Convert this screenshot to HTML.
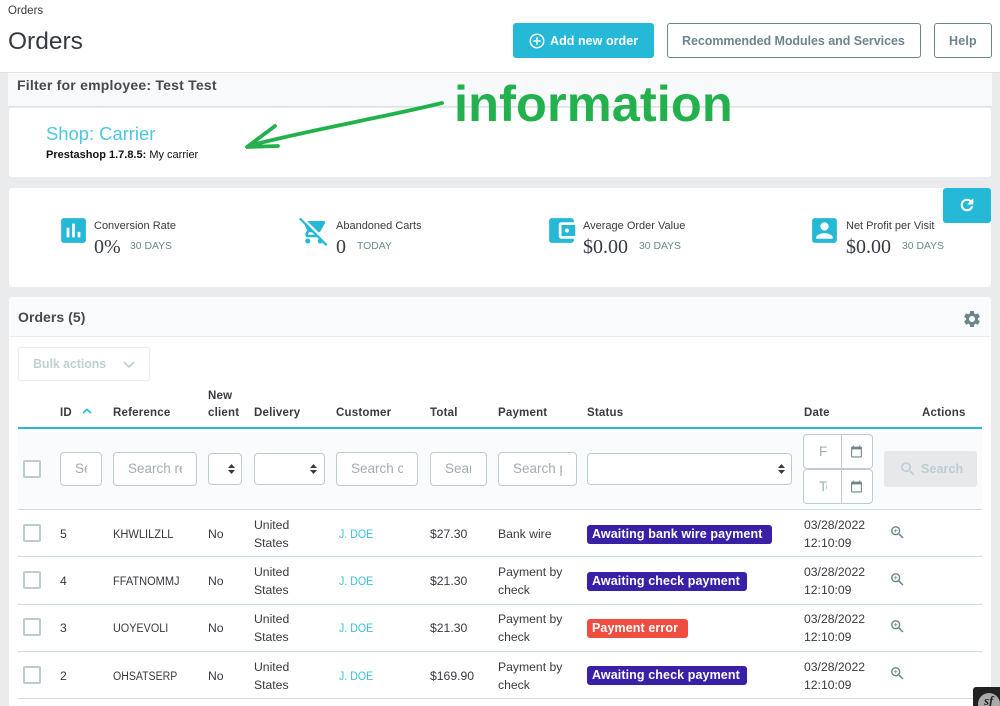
<!DOCTYPE html>
<html><head><meta charset="utf-8"><title>Orders</title>
<style>
html,body{margin:0;padding:0;width:1000px;height:706px;overflow:hidden}
body{position:relative;background:#e9ebec;font-family:"Liberation Sans",sans-serif;font-size:12.2px;color:#363a41}
.b{position:absolute;box-sizing:border-box}
.t{position:absolute;white-space:nowrap;line-height:18px}
.c{margin-top:1px}
.r{font-size:12.2px;margin-top:1px;transform-origin:0 50%}
.j{font-size:12.2px;margin-top:1px;color:#3fc0dc;transform:scaleX(.87);transform-origin:0 50%}
.h{font-weight:700;font-size:11.5px;letter-spacing:.2px;color:#363a41;margin-top:1px}
.g{color:#6c868e}
.in{position:absolute;box-sizing:border-box;background:#fff;border:1px solid #bbcdd2;border-radius:4px;color:#a0aeb3;font-size:13.5px;line-height:32px;white-space:nowrap}
.in div{overflow:hidden}
.cb{position:absolute;box-sizing:border-box;width:18px;height:18px;left:23px;background:#fff;border:2px solid #bbcdd2;border-radius:2px}
.line{position:absolute;left:18px;width:964px;height:1px;background:#cfdde1}
.bd{position:absolute;height:19px;line-height:19px;left:587px;border-radius:3px;color:#fff;font-weight:700;font-size:12.5px;padding:0 5px;box-sizing:border-box;white-space:nowrap;letter-spacing:.1px}
svg{position:absolute}
</style></head><body>
<!-- header -->
<div class="b" style="left:0;top:0;width:1000px;height:73px;background:#fff;border-bottom:1px solid #dfe3e5"></div>
<div class="t" style="left:8px;top:2px;font-size:11.5px;color:#363a41">Orders</div>
<div class="t" style="left:8px;top:28px;font-size:24.5px;line-height:28px;color:#363a41">Orders</div>
<div class="b" style="left:513px;top:23px;width:141px;height:35px;background:#25b9d7;border-radius:3px"></div>
<svg style="left:528px;top:32px" width="18" height="18" viewBox="0 0 24 24" fill="#fff"><path d="M13 7h-2v4H7v2h4v4h2v-4h4v-2h-4V7zm-1-5C6.48 2 2 6.48 2 12s4.48 10 10 10 10-4.48 10-10S17.52 2 12 2zm0 18c-4.41 0-8-3.59-8-8s3.59-8 8-8 8 3.59 8 8-3.59 8-8 8z"/></svg>
<div class="t" style="left:550px;top:32px;color:#fff;font-weight:700;font-size:12.5px;letter-spacing:.05px">Add new order</div>
<div class="b" style="left:667px;top:23px;width:254px;height:35px;background:#fff;border:1px solid #6c868e;border-radius:3px"></div>
<div class="t g" style="left:682px;top:32px;font-weight:700;font-size:12.5px;letter-spacing:-.05px">Recommended Modules and Services</div>
<div class="b" style="left:934px;top:23px;width:58px;height:35px;background:#fff;border:1px solid #6c868e;border-radius:3px"></div>
<div class="t g" style="left:949px;top:32px;font-weight:700;font-size:12.5px;letter-spacing:.2px">Help</div>
<!-- filter -->
<div class="b" style="left:8px;top:73px;width:984px;height:34px;background:#f8f9fb;border-bottom:1px solid #d9e2e6"></div>
<div class="t" style="left:17px;top:76px;font-size:14px;font-weight:700;color:#464a50;letter-spacing:.22px">Filter for employee: Test Test</div>
<div class="b" style="left:9px;top:108px;width:982px;height:69px;background:#fff;border-radius:3px"></div>
<div class="t" style="left:46px;top:123px;font-size:18.4px;line-height:22px;color:#4fc6df">Shop: Carrier</div>
<div class="t" style="left:46px;top:146px;font-size:11px;color:#111"><b>Prestashop 1.7.8.5:</b> My carrier</div>
<div class="t" style="left:454px;top:74px;font-size:50.5px;line-height:60px;font-weight:700;color:#22b14c;letter-spacing:.1px">information</div>
<svg style="left:0;top:0" width="1000" height="200" fill="none" stroke="#22b14c" stroke-width="3.8" stroke-linecap="round" stroke-linejoin="round"><path d="M442 103C380 118 310 130 252 145M275 126L247 147L278 146"/></svg>
<!-- KPI -->
<div class="b" style="left:9px;top:188px;width:982px;height:99px;background:#fff;border-radius:3px"></div>
<div class="b" style="left:943px;top:188px;width:48px;height:34.5px;background:#25b9d7;border-radius:3px"></div>
<svg style="left:958px;top:196px" width="18" height="18" viewBox="0 0 24 24" fill="#fff" stroke="#fff" stroke-width=".8"><path d="M17.65 6.35C16.2 4.9 14.21 4 12 4c-4.42 0-7.99 3.58-7.99 8s3.57 8 7.99 8c3.73 0 6.84-2.55 7.73-6h-2.08c-.82 2.33-3.04 4-5.65 4-3.31 0-6-2.69-6-6s2.69-6 6-6c1.66 0 3.14.69 4.22 1.78L13 11h7V4l-2.35 2.35z"/></svg>
<svg style="left:57px;top:214px" width="33" height="33" viewBox="0 0 24 24" fill="#25b9d7"><path d="M19 3H5c-1.1 0-2 .9-2 2v14c0 1.1.9 2 2 2h14c1.1 0 2-.9 2-2V5c0-1.1-.9-2-2-2zM9 17H7v-7h2v7zm4 0h-2V7h2v10zm4 0h-2v-4h2v4z"/></svg>
<svg style="left:299px;top:216px" width="30" height="30" viewBox="0 0 24 24" fill="#25b9d7"><path d="M22.73 22.73L2.77 2.77 2 2l-.73-.73L0 2.54l4.39 4.39 2.21 4.66-1.35 2.45c-.16.28-.25.61-.25.96 0 1.1.9 2 2 2h7.46l1.38 1.38c-.5.36-.83.95-.83 1.62 0 1.1.89 2 1.99 2 .67 0 1.26-.33 1.62-.84L21.46 24l1.27-1.27zM7.42 15c-.14 0-.25-.11-.25-.25l.03-.12.9-1.63h2.36l2 2H7.42zm8.13-2c.75 0 1.41-.41 1.75-1.03l3.58-6.49c.08-.14.12-.31.12-.48 0-.55-.45-1-1-1H6.54l9.01 9zM7 18c-1.1 0-1.99.9-1.99 2S5.9 22 7 22s2-.9 2-2-.9-2-2-2z"/></svg>
<svg style="left:545px;top:214px" width="33" height="33" viewBox="0 0 24 24" fill="#25b9d7"><path d="M21 18v1c0 1.1-.9 2-2 2H5c-1.11 0-2-.9-2-2V5c0-1.1.89-2 2-2h14c1.1 0 2 .9 2 2v1h-9c-1.11 0-2 .9-2 2v8c0 1.1.89 2 2 2h9zm-9-2h10V8H12v8zm4-2.5c-.83 0-1.5-.67-1.5-1.5s.67-1.5 1.5-1.5 1.5.67 1.5 1.5-.67 1.5-1.5 1.5z"/></svg>
<svg style="left:808px;top:214px" width="33" height="33" viewBox="0 0 24 24" fill="#25b9d7"><path d="M3 5v14c0 1.1.89 2 2 2h14c1.1 0 2-.9 2-2V5c0-1.1-.9-2-2-2H5c-1.11 0-2 .9-2 2zm12 4c0 1.66-1.34 3-3 3s-3-1.34-3-3 1.34-3 3-3 3 1.34 3 3zm-9 8c0-2 4-3.1 6-3.1s6 1.1 6 3.1v1H6v-1z"/></svg>
<div class="t" style="left:94px;top:217px;font-size:11px">Conversion Rate</div>
<div class="t" style="left:94px;top:238px;font-family:'Liberation Serif',serif;font-size:20px">0%</div>
<div class="t g" style="left:130px;top:238px;font-size:10.4px">30 DAYS</div>
<div class="t" style="left:336px;top:217px;font-size:11px">Abandoned Carts</div>
<div class="t" style="left:336px;top:238px;font-family:'Liberation Serif',serif;font-size:20px">0</div>
<div class="t g" style="left:357px;top:238px;font-size:10.4px">TODAY</div>
<div class="t" style="left:583px;top:217px;font-size:11px">Average Order Value</div>
<div class="t" style="left:583px;top:238px;font-family:'Liberation Serif',serif;font-size:20px">$0.00</div>
<div class="t g" style="left:639px;top:238px;font-size:10.4px">30 DAYS</div>
<div class="t" style="left:846px;top:217px;font-size:11px">Net Profit per Visit</div>
<div class="t" style="left:846px;top:238px;font-family:'Liberation Serif',serif;font-size:20px">$0.00</div>
<div class="t g" style="left:902px;top:238px;font-size:10.4px">30 DAYS</div>
<!-- panel -->
<div class="b" style="left:9px;top:297px;width:982px;height:409px;background:#fff;border-radius:3px 3px 0 0"></div>
<div class="b" style="left:9px;top:297px;width:982px;height:40px;background:#fafbfc;border-bottom:1px solid #e6ecee;border-radius:3px 3px 0 0"></div>
<div class="t" style="left:18px;top:308px;font-size:14px;font-weight:700;color:#464a50;letter-spacing:.05px">Orders (5)</div>
<svg style="left:962px;top:309px" width="20" height="20" viewBox="0 0 24 24" fill="#6c868e"><path d="M19.14 12.94c.04-.3.06-.61.06-.94 0-.32-.02-.64-.07-.94l2.03-1.58c.18-.14.23-.41.12-.61l-1.92-3.32c-.12-.22-.37-.29-.59-.22l-2.39.96c-.5-.38-1.03-.7-1.62-.94l-.36-2.54c-.04-.24-.24-.41-.48-.41h-3.84c-.24 0-.43.17-.47.41l-.36 2.54c-.59.24-1.13.57-1.62.94l-2.39-.96c-.22-.08-.47 0-.59.22L2.74 8.87c-.12.21-.08.47.12.61l2.03 1.58c-.05.3-.09.63-.09.94s.02.64.07.94l-2.03 1.58c-.18.14-.23.41-.12.61l1.92 3.32c.12.22.37.29.59.22l2.39-.96c.5.38 1.03.7 1.62.94l.36 2.54c.05.24.24.41.48.41h3.84c.24 0 .44-.17.47-.41l.36-2.54c.59-.24 1.13-.56 1.62-.94l2.39.96c.22.08.47 0 .59-.22l1.92-3.32c.12-.22.07-.47-.12-.61l-2.01-1.58zM12 15.6c-1.98 0-3.6-1.62-3.6-3.6s1.62-3.6 3.6-3.6 3.6 1.62 3.6 3.6-1.62 3.6-3.6 3.6z"/></svg>
<div class="b" style="left:18px;top:347px;width:132px;height:34px;background:#fff;border:1px solid #e8edef;border-radius:3px"></div>
<div class="t" style="left:33px;top:355px;font-size:12.5px;font-weight:700;color:#bfd0d5;letter-spacing:-.1px">Bulk actions</div>
<svg style="left:122px;top:360px" width="14" height="10" fill="none" stroke="#bfd0d5" stroke-width="1.8"><path d="M2 2L7 7L12 2"/></svg>
<!-- table head -->
<div class="t h" style="left:60px;top:403px">ID</div>
<svg style="left:82px;top:408px" width="10" height="7" fill="none" stroke="#25b9d7" stroke-width="1.7"><path d="M1 5L5 1.5L9 5"/></svg>
<div class="t h" style="left:113px;top:403px">Reference</div>
<div class="t h" style="left:208px;top:386px">New</div>
<div class="t h" style="left:208px;top:403px">client</div>
<div class="t h" style="left:254px;top:403px">Delivery</div>
<div class="t h" style="left:336px;top:403px">Customer</div>
<div class="t h" style="left:430px;top:403px">Total</div>
<div class="t h" style="left:498px;top:403px">Payment</div>
<div class="t h" style="left:587px;top:403px">Status</div>
<div class="t h" style="left:804px;top:403px">Date</div>
<div class="t h" style="left:922px;top:403px">Actions</div>
<div class="b" style="left:18px;top:427px;width:964px;height:2px;background:#25b9d7"></div>
<!-- filter row -->
<div class="b" style="left:18px;top:429px;width:964px;height:80px;background:#fafbfc"></div>
<div class="cb" style="top:460px"></div>
<div class="in" style="left:60px;top:452px;width:42px;height:34px;padding-left:14px"><div style="width:12px">Search</div></div>
<div class="in" style="left:113px;top:452px;width:84px;height:34px;padding-left:14px"><div style="width:54px">Search reference</div></div>
<div class="in" style="left:208px;top:453px;width:34px;height:32px"></div>
<div class="in" style="left:254px;top:453px;width:71px;height:32px"></div>
<div class="in" style="left:336px;top:452px;width:82px;height:34px;padding-left:14px"><div style="width:52px">Search customer</div></div>
<div class="in" style="left:430px;top:452px;width:57px;height:34px;padding-left:14px"><div style="width:26px">Search total</div></div>
<div class="in" style="left:498px;top:452px;width:79px;height:34px;padding-left:14px"><div style="width:49px">Search payment</div></div>
<div class="in" style="left:587px;top:453px;width:205px;height:32px"></div>
<svg style="left:228px;top:464px" width="7" height="10" fill="#363a41"><path d="M3.5 0L7 4H0zM3.5 10L0 6H7z"/></svg>
<svg style="left:310px;top:464px" width="7" height="10" fill="#363a41"><path d="M3.5 0L7 4H0zM3.5 10L0 6H7z"/></svg>
<svg style="left:778px;top:464px" width="7" height="10" fill="#363a41"><path d="M3.5 0L7 4H0zM3.5 10L0 6H7z"/></svg>
<div class="in" style="left:803px;top:434px;width:70px;height:35px;padding-left:15px;line-height:34px"><div style="width:8px">From</div></div>
<div class="in" style="left:803px;top:469px;width:70px;height:35px;padding-left:15px;line-height:34px"><div style="width:8px">To</div></div>
<div class="b" style="left:841px;top:434px;width:1px;height:70px;background:#bbcdd2"></div>
<svg style="left:850px;top:445px" width="13" height="13" viewBox="0 0 24 24" fill="#6c868e"><path d="M20 3h-1V1h-2v2H7V1H5v2H4c-1.1 0-2 .9-2 2v16c0 1.1.9 2 2 2h16c1.1 0 2-.9 2-2V5c0-1.1-.9-2-2-2zm0 18H4V8h16v13z"/></svg>
<svg style="left:850px;top:480px" width="13" height="13" viewBox="0 0 24 24" fill="#6c868e"><path d="M20 3h-1V1h-2v2H7V1H5v2H4c-1.1 0-2 .9-2 2v16c0 1.1.9 2 2 2h16c1.1 0 2-.9 2-2V5c0-1.1-.9-2-2-2zm0 18H4V8h16v13z"/></svg>
<div class="b" style="left:884px;top:451px;width:93px;height:36px;background:#e6e8ea;border-radius:3px"></div>
<svg style="left:899px;top:460px" width="18" height="18" viewBox="0 0 24 24" fill="#bccdd2"><path d="M15.5 14h-.79l-.28-.27C15.41 12.59 16 11.11 16 9.5 16 5.91 13.09 3 9.5 3S3 5.91 3 9.5 5.91 16 9.5 16c1.61 0 3.09-.59 4.23-1.57l.27.28v.79l5 4.99L20.49 19l-4.99-5zm-6 0C7.01 14 5 11.99 5 9.5S7.01 5 9.5 5 14 7.01 14 9.5 11.99 14 9.5 14z"/></svg>
<div class="t" style="left:921px;top:460px;font-size:12.5px;font-weight:700;color:#bccdd2;letter-spacing:.1px">Search</div>
<div class="line" style="top:509px"></div>
<!-- row 5 -->
<div class="cb" style="top:524px"></div>
<div class="t c" style="left:60px;top:524px">5</div>
<div class="t r" style="left:113px;top:524px;transform:scaleX(.91)">KHWLILZLL</div>
<div class="t c" style="left:208px;top:524px">No</div>
<div class="t c" style="left:254px;top:515px">United</div><div class="t c" style="left:254px;top:533px">States</div>
<div class="t j" style="left:339px;top:524px">J. DOE</div>
<div class="t c" style="left:430px;top:524px">$27.30</div>
<div class="t c" style="left:498px;top:524px">Bank wire</div>
<div class="bd" style="top:524.5px;width:185px;background:#3a20a6">Awaiting bank wire payment</div>
<div class="t c" style="left:804px;top:515px">03/28/2022</div><div class="t c" style="left:804px;top:533px">12:10:09</div>
<svg style="left:889px;top:524px" width="17" height="17" viewBox="0 0 24 24" fill="#6c868e"><path d="M15.5 14h-.79l-.28-.27C15.41 12.59 16 11.11 16 9.5 16 5.91 13.09 3 9.5 3S3 5.91 3 9.5 5.91 16 9.5 16c1.61 0 3.09-.59 4.23-1.57l.27.28v.79l5 4.99L20.49 19l-4.99-5zm-6 0C7.01 14 5 11.99 5 9.5S7.01 5 9.5 5 14 7.01 14 9.5 11.99 14 9.5 14zM12 10h-2v2H9v-2H7V9h2V7h1v2h2v1z"/></svg>
<div class="line" style="top:556px"></div>
<!-- row 4 -->
<div class="cb" style="top:571px"></div>
<div class="t c" style="left:60px;top:571px">4</div>
<div class="t r" style="left:113px;top:571px;transform:scaleX(.905)">FFATNOMMJ</div>
<div class="t c" style="left:208px;top:571px">No</div>
<div class="t c" style="left:254px;top:562px">United</div><div class="t c" style="left:254px;top:580px">States</div>
<div class="t j" style="left:339px;top:571px">J. DOE</div>
<div class="t c" style="left:430px;top:571px">$21.30</div>
<div class="t c" style="left:498px;top:562px">Payment by</div><div class="t c" style="left:498px;top:580px">check</div>
<div class="bd" style="top:572px;width:160px;background:#3a20a6">Awaiting check payment</div>
<div class="t c" style="left:804px;top:562px">03/28/2022</div><div class="t c" style="left:804px;top:580px">12:10:09</div>
<svg style="left:889px;top:571px" width="17" height="17" viewBox="0 0 24 24" fill="#6c868e"><path d="M15.5 14h-.79l-.28-.27C15.41 12.59 16 11.11 16 9.5 16 5.91 13.09 3 9.5 3S3 5.91 3 9.5 5.91 16 9.5 16c1.61 0 3.09-.59 4.23-1.57l.27.28v.79l5 4.99L20.49 19l-4.99-5zm-6 0C7.01 14 5 11.99 5 9.5S7.01 5 9.5 5 14 7.01 14 9.5 11.99 14 9.5 14zM12 10h-2v2H9v-2H7V9h2V7h1v2h2v1z"/></svg>
<div class="line" style="top:603.5px"></div>
<!-- row 3 -->
<div class="cb" style="top:618px"></div>
<div class="t c" style="left:60px;top:618px">3</div>
<div class="t r" style="left:113px;top:618px;transform:scaleX(.887)">UOYEVOLI</div>
<div class="t c" style="left:208px;top:618px">No</div>
<div class="t c" style="left:254px;top:609px">United</div><div class="t c" style="left:254px;top:627px">States</div>
<div class="t j" style="left:339px;top:618px">J. DOE</div>
<div class="t c" style="left:430px;top:618px">$21.30</div>
<div class="t c" style="left:498px;top:609px">Payment by</div><div class="t c" style="left:498px;top:627px">check</div>
<div class="bd" style="top:619px;width:101px;background:#ef4d40">Payment error</div>
<div class="t c" style="left:804px;top:609px">03/28/2022</div><div class="t c" style="left:804px;top:627px">12:10:09</div>
<svg style="left:889px;top:618px" width="17" height="17" viewBox="0 0 24 24" fill="#6c868e"><path d="M15.5 14h-.79l-.28-.27C15.41 12.59 16 11.11 16 9.5 16 5.91 13.09 3 9.5 3S3 5.91 3 9.5 5.91 16 9.5 16c1.61 0 3.09-.59 4.23-1.57l.27.28v.79l5 4.99L20.49 19l-4.99-5zm-6 0C7.01 14 5 11.99 5 9.5S7.01 5 9.5 5 14 7.01 14 9.5 11.99 14 9.5 14zM12 10h-2v2H9v-2H7V9h2V7h1v2h2v1z"/></svg>
<div class="line" style="top:651px"></div>
<!-- row 2 -->
<div class="cb" style="top:666px"></div>
<div class="t c" style="left:60px;top:666px">2</div>
<div class="t r" style="left:113px;top:666px;transform:scaleX(.865)">OHSATSERP</div>
<div class="t c" style="left:208px;top:666px">No</div>
<div class="t c" style="left:254px;top:657px">United</div><div class="t c" style="left:254px;top:675px">States</div>
<div class="t j" style="left:339px;top:666px">J. DOE</div>
<div class="t c" style="left:430px;top:666px">$169.90</div>
<div class="t c" style="left:498px;top:657px">Payment by</div><div class="t c" style="left:498px;top:675px">check</div>
<div class="bd" style="top:666px;width:160px;background:#3a20a6">Awaiting check payment</div>
<div class="t c" style="left:804px;top:657px">03/28/2022</div><div class="t c" style="left:804px;top:675px">12:10:09</div>
<svg style="left:889px;top:665px" width="17" height="17" viewBox="0 0 24 24" fill="#6c868e"><path d="M15.5 14h-.79l-.28-.27C15.41 12.59 16 11.11 16 9.5 16 5.91 13.09 3 9.5 3S3 5.91 3 9.5 5.91 16 9.5 16c1.61 0 3.09-.59 4.23-1.57l.27.28v.79l5 4.99L20.49 19l-4.99-5zm-6 0C7.01 14 5 11.99 5 9.5S7.01 5 9.5 5 14 7.01 14 9.5 11.99 14 9.5 14zM12 10h-2v2H9v-2H7V9h2V7h1v2h2v1z"/></svg>
<div class="line" style="top:698px"></div>
<!-- sf toolbar -->
<div class="b" style="left:973px;top:687px;width:27px;height:19px;background:#222;border-radius:3px 0 0 0;overflow:hidden">
<div class="b" style="left:5px;top:6px;width:22px;height:22px;background:#aaa;border-radius:50%"></div>
<div class="t" style="left:11px;top:5px;font-family:'Liberation Serif',serif;font-style:italic;font-weight:700;font-size:13px;color:#222">sf</div>
</div>
</body></html>
